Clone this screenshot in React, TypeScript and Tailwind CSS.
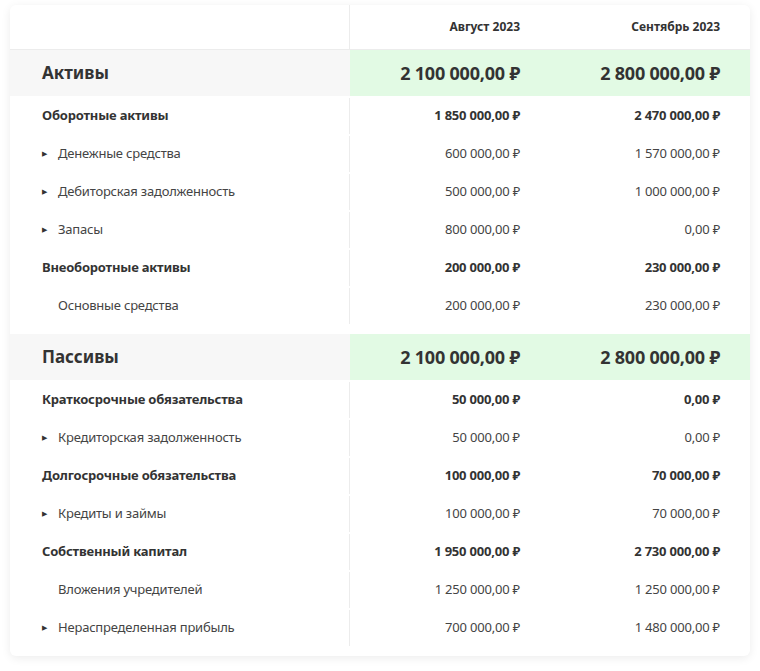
import { ReactNode } from 'react';

type Row = { label: string; a: string; b: string; kind: 'group' | 'item' | 'leaf' };
type Section = { title: string; a: string; b: string; rows: Row[] };

const sections: Section[] = [
  {
    title: 'Активы',
    a: '2 100 000,00 ₽',
    b: '2 800 000,00 ₽',
    rows: [
      { label: 'Оборотные активы', a: '1 850 000,00 ₽', b: '2 470 000,00 ₽', kind: 'group' },
      { label: 'Денежные средства', a: '600 000,00 ₽', b: '1 570 000,00 ₽', kind: 'item' },
      { label: 'Дебиторская задолженность', a: '500 000,00 ₽', b: '1 000 000,00 ₽', kind: 'item' },
      { label: 'Запасы', a: '800 000,00 ₽', b: '0,00 ₽', kind: 'item' },
      { label: 'Внеоборотные активы', a: '200 000,00 ₽', b: '230 000,00 ₽', kind: 'group' },
      { label: 'Основные средства', a: '200 000,00 ₽', b: '230 000,00 ₽', kind: 'leaf' },
    ],
  },
  {
    title: 'Пассивы',
    a: '2 100 000,00 ₽',
    b: '2 800 000,00 ₽',
    rows: [
      { label: 'Краткосрочные обязательства', a: '50 000,00 ₽', b: '0,00 ₽', kind: 'group' },
      { label: 'Кредиторская задолженность', a: '50 000,00 ₽', b: '0,00 ₽', kind: 'item' },
      { label: 'Долгосрочные обязательства', a: '100 000,00 ₽', b: '70 000,00 ₽', kind: 'group' },
      { label: 'Кредиты и займы', a: '100 000,00 ₽', b: '70 000,00 ₽', kind: 'item' },
      { label: 'Собственный капитал', a: '1 950 000,00 ₽', b: '2 730 000,00 ₽', kind: 'group' },
      { label: 'Вложения учредителей', a: '1 250 000,00 ₽', b: '1 250 000,00 ₽', kind: 'leaf' },
      { label: 'Нераспределенная прибыль', a: '700 000,00 ₽', b: '1 480 000,00 ₽', kind: 'item' },
    ],
  },
];

const Line = ({ left, a, b, cls }: { left: ReactNode; a: string; b: string; cls: string }) => (
  <div className={`grid grid-cols-[340px_200px_200px] ${cls}`}>
    <div className="flex items-center pl-8 border-r border-[#ececec]">{left}</div>
    <div className="flex items-center justify-end pr-[30px]">{a}</div>
    <div className="flex items-center justify-end pr-[30px]">{b}</div>
  </div>
);

export default function App() {
  return (
    <div className="w-[760px] h-[671px] bg-white pt-[5px] px-[10px]" style={{ fontFamily: '"Noto Sans", sans-serif' }}>
      <div className="w-[740px] bg-white rounded-md shadow-[0_2px_10px_rgba(0,0,0,0.08)] text-[#333]">
        <div className="grid grid-cols-[340px_200px_200px] h-[45px] text-[12px] font-bold border-b border-[#ececec]">
          <div className="border-r border-[#ececec]" />
          <div className="flex items-center justify-end pr-[30px]">Август 2023</div>
          <div className="flex items-center justify-end pr-[30px]">Сентябрь 2023</div>
        </div>
        {sections.map((s) => (
          <div key={s.title} className="pb-[10px]">
            <div className="grid grid-cols-[340px_400px] h-[46px] text-[17px] font-bold">
              <div className="flex items-center pl-8 bg-[#f7f7f7]">{s.title}</div>
              <div className="grid grid-cols-2 bg-[#e2fae4]">
                <div className="flex items-center justify-end pr-[30px] text-[18px] tracking-[-0.2px]">{s.a}</div>
                <div className="flex items-center justify-end pr-[30px] text-[18px] tracking-[-0.2px]">{s.b}</div>
              </div>
            </div>
            {s.rows.map((r) => (
              <Line
                key={r.label}
                cls={`h-[38px] pt-[2px] text-[13px] tracking-[-0.2px] ${r.kind === 'group' ? 'font-bold' : 'text-[#444]'}`}
                a={r.a}
                b={r.b}
                left={
                  r.kind === 'group' ? (
                    <span>{r.label}</span>
                  ) : (
                    <span className="flex items-center">
                      <span className="w-4 text-[7px] text-[#333]">{r.kind === 'item' ? '▶' : ''}</span>
                      {r.label}
                    </span>
                  )
                }
              />
            ))}
          </div>
        ))}
      </div>
    </div>
  );
}
